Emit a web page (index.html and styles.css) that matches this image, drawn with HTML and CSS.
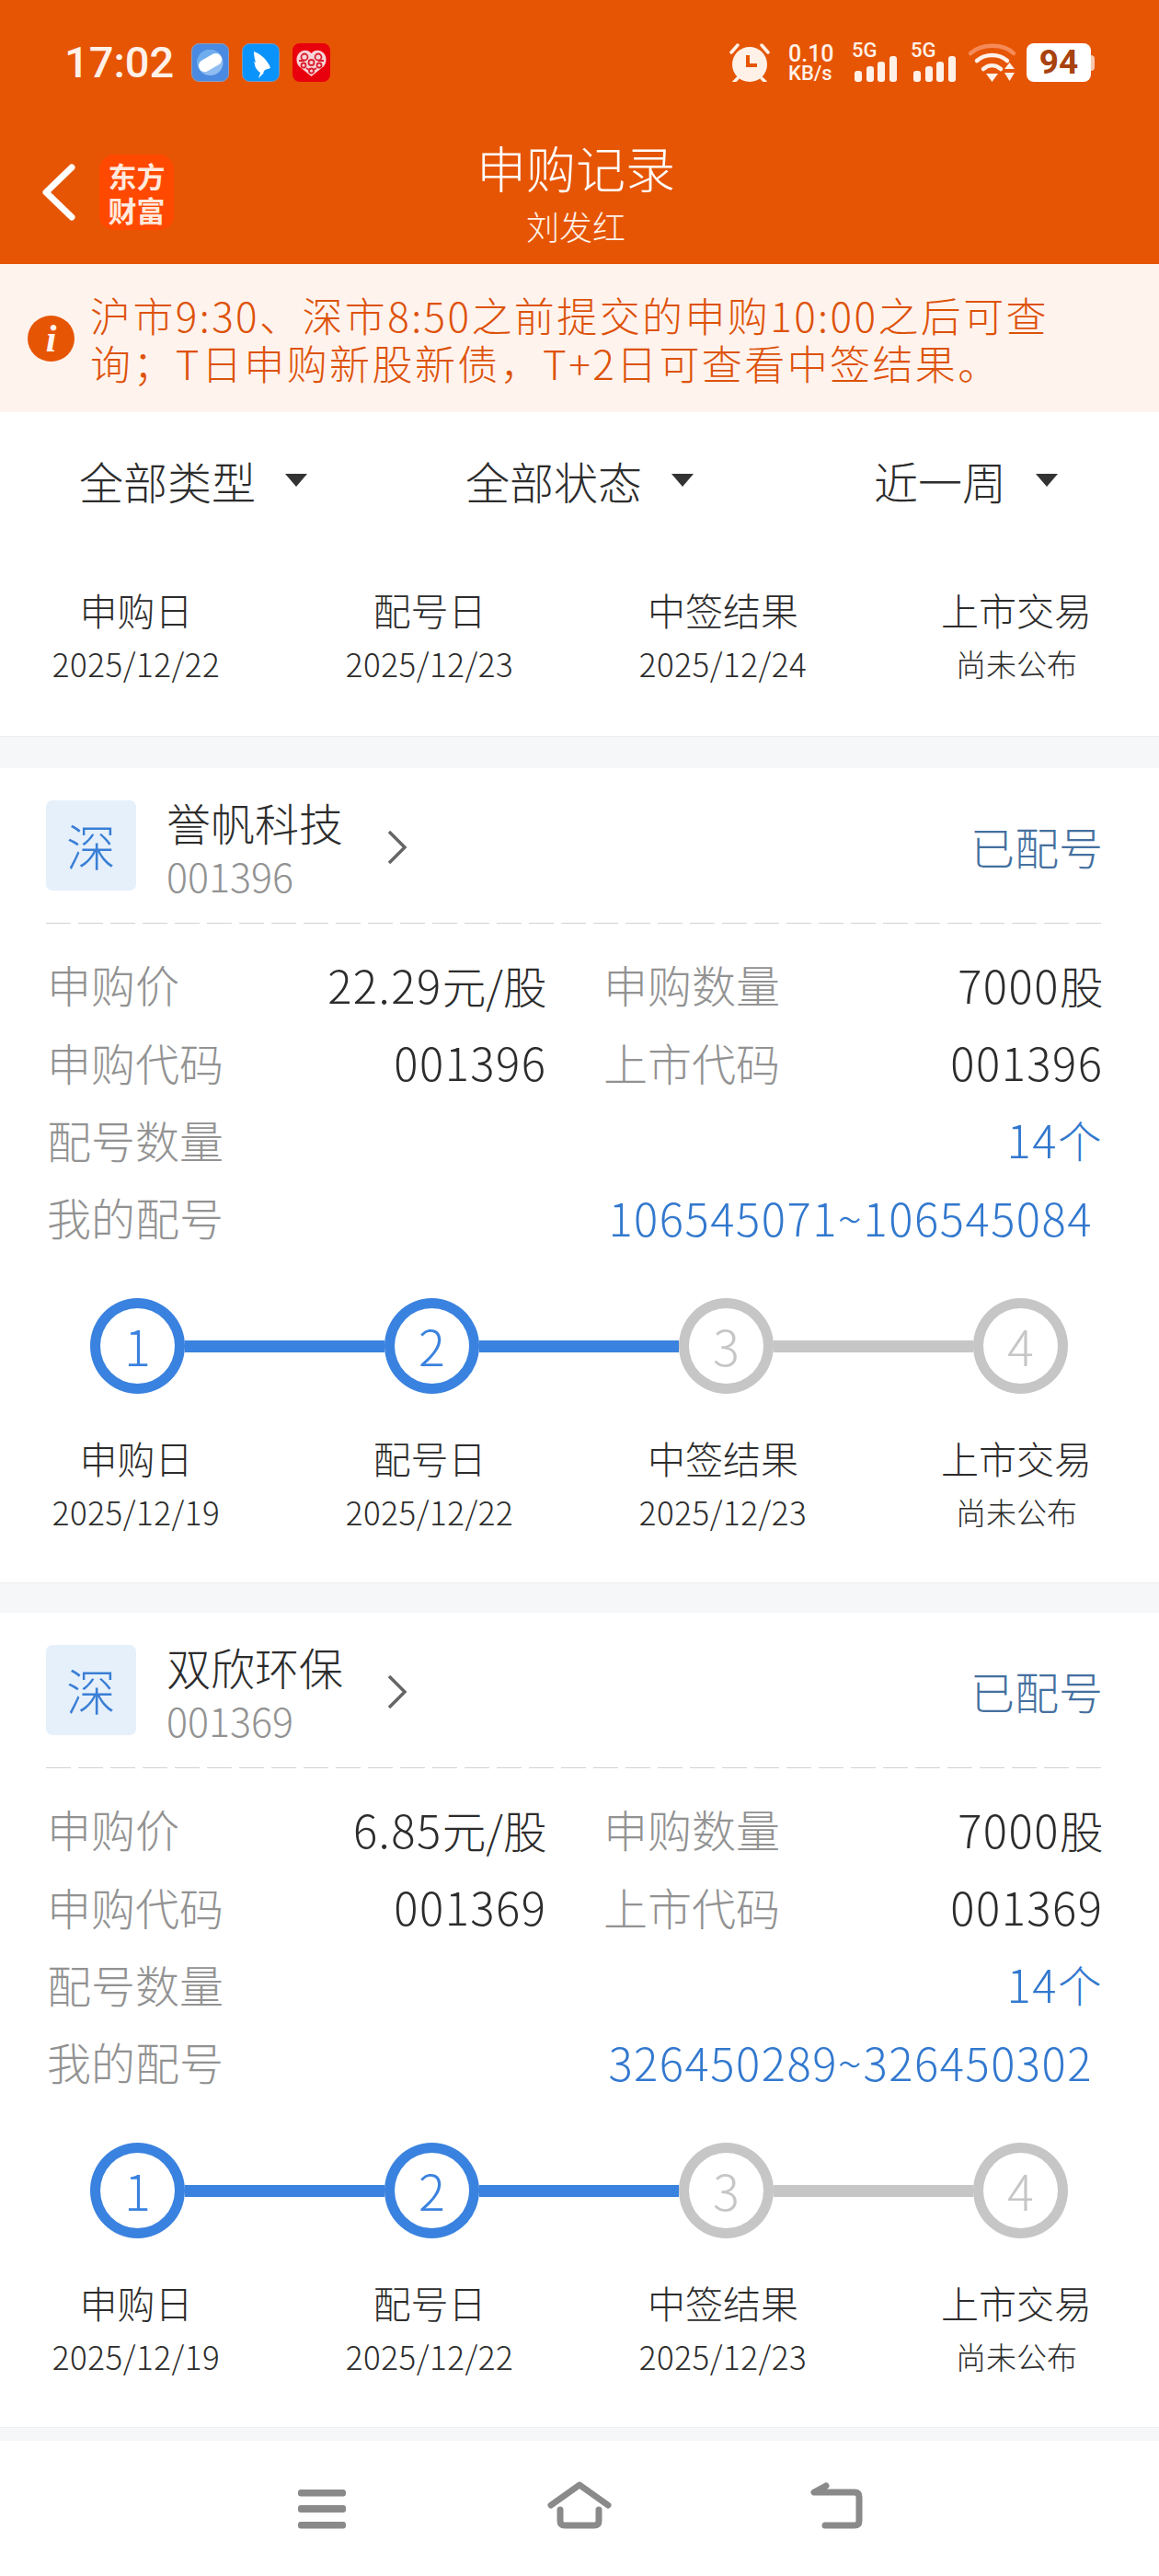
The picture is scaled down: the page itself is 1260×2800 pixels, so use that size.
FILE: index.html
```html
<!DOCTYPE html>
<html lang="zh-CN">
<head>
<meta charset="utf-8">
<title>申购记录</title>
<link rel="stylesheet" href="styles.css">
</head>
<body>
<div class="page">
  <header class="header">
    <div class="status">
      <div class="status-left">
        <span class="time">17:02</span>
        <svg class="app" viewBox="0 0 41 42"><rect x=".5" y=".5" width="40" height="41" rx="8" fill="#4A8AE0" stroke="#8E9DBB"/><circle cx="20.500" cy="21" r="14" fill="#8FBDF2"/><path d="M20.500 7a14 14 0 0 1 13 9L8 28a14 14 0 0 1 12.500-21z" fill="#6FAEEE"/><rect x="7" y="14.500" width="27" height="13" rx="6.500" fill="#fff" transform="rotate(-30 20.500 21)"/></svg>
        <svg class="app" viewBox="0 0 41 42"><rect x=".5" y=".5" width="40" height="41" rx="8" fill="#0A93FB" stroke="#7D97B8"/><path d="M13 9c6 2 12 7 15 12 1.500 2 2.500 4 3 6l-6 2-2 3 1 0-6 6 2-6c-3-2-6-6-6-9l-1-3 2 1c-1-3-2-8-2-12z" fill="#fff"/></svg>
        <svg class="app" viewBox="0 0 41 42"><rect width="41" height="42" rx="8" fill="#E9000D"/><path d="M20.500 36 7 25c-4-5-3-12 1-15 4-3 9-3 12.500 1 3.500-4 8.500-4 12.500-1 4 3 5 10 1 15z" fill="#F8D5D8"/><g stroke="#D9202E" stroke-width="1.800" fill="none"><circle cx="13" cy="15" r="3.500"/><circle cx="28" cy="15" r="3.500"/><circle cx="20.500" cy="21" r="3"/><circle cx="12" cy="24" r="2.500"/><circle cx="29" cy="24" r="2.500"/><circle cx="20.500" cy="30" r="2.500"/><path d="M7 19h6M28 19h6M15 27l3 2M26 27l-3 2"/></g></svg>
      </div>
      <div class="status-right">
        <svg class="alarm" viewBox="0 0 44 42"><circle cx="22" cy="23" r="19" fill="#FFF1E8"/><path d="M2 10 9 2M42 10 35 2M9 38 5 42M35 38 39 42" stroke="#FFF1E8" stroke-width="3.500" stroke-linecap="round"/><path d="M20 13v11h10" fill="none" stroke="#E65504" stroke-width="4"/></svg>
        <div class="speed"><span class="speed-num">0.10</span><span class="speed-unit">KB/s</span></div>
        <div class="sig"><span class="sig-text">5G</span><svg class="sig-bars" viewBox="0 0 49 28"><rect x="3" y="16" width="8" height="12" rx="3"/><rect x="16" y="11" width="8" height="17" rx="3"/><rect x="28" y="6" width="8" height="22" rx="3"/><rect x="41" y="0" width="8" height="28" rx="3"/></svg></div>
        <div class="sig sig-two"><span class="sig-text">5G</span><svg class="sig-bars" viewBox="0 0 49 28"><rect x="3" y="16" width="8" height="12" rx="3"/><rect x="16" y="11" width="8" height="17" rx="3"/><rect x="28" y="6" width="8" height="22" rx="3"/><rect x="41" y="0" width="8" height="28" rx="3"/></svg></div>
        <svg class="wifi" viewBox="0 0 51 42"><g fill="none" stroke-linecap="round" stroke-width="4.500"><path d="M2 11C14 0 38 0 49 11" stroke="#F58A58"/><path d="M9 19c9-8 24-8 33 0" stroke="#FFF1E8"/><path d="M16 28c6-5 13-5 19 0" stroke="#FFF1E8"/></g><path d="M19 33h13l-6.500 9zM39 28l5.500-7 5.500 7zM39 32h11l-5.500 9z" fill="#FFF1E8"/></svg>
        <div class="battery"><span class="battery-body">94</span><span class="battery-nub"></span></div>
      </div>
    </div>
    <div class="titlebar">
      <div class="title-left">
        <svg class="back" viewBox="0 0 37 62"><path d="M33 4 5 31l28 27" fill="none" stroke="#fff" stroke-width="7" stroke-linecap="round" stroke-linejoin="round"/></svg>
        <div class="logo"><span>东方</span><span>财富</span></div>
      </div>
      <div class="title-mid">
        <div class="title">申购记录</div>
        <div class="subtitle">刘发红</div>
      </div>
    </div>
  </header>

  <div class="notice">
    <span class="notice-icon">i</span>
    <p class="notice-text">沪市9:30、深市8:50之前提交的申购10:00之后可查询；T日申购新股新债，T+2日可查看中签结果。</p>
  </div>

  <div class="filters">
    <div class="filter"><span>全部类型</span><i class="caret"></i></div>
    <div class="filter"><span>全部状态</span><i class="caret"></i></div>
    <div class="filter"><span>近一周</span><i class="caret"></i></div>
  </div>

  <section class="block block-top">
    <div class="dates">
      <div class="date-col"><div class="date-label">申购日</div><div class="date-val">2025/12/22</div></div>
      <div class="date-col"><div class="date-label">配号日</div><div class="date-val">2025/12/23</div></div>
      <div class="date-col"><div class="date-label">中签结果</div><div class="date-val">2025/12/24</div></div>
      <div class="date-col"><div class="date-label">上市交易</div><div class="date-val date-small">尚未公布</div></div>
    </div>
  </section>

  <section class="block card">
    <div class="card-head">
      <span class="market">深</span>
      <div class="stock"><div class="stock-name">誉帆科技</div><div class="stock-code">001396</div></div>
      <svg class="chev" viewBox="0 0 22 38"><path d="M2 2l17 17L2 36" fill="none" stroke="#666" stroke-width="3.500"/></svg>
      <span class="state">已配号</span>
    </div>
    <div class="rows">
      <div class="cell"><span class="k">申购价</span><span class="v">22.29<span class="u">元/股</span></span></div>
      <div class="cell"><span class="k">申购数量</span><span class="v">7000<span class="u">股</span></span></div>
      <div class="cell"><span class="k">申购代码</span><span class="v">001396</span></div>
      <div class="cell"><span class="k">上市代码</span><span class="v">001396</span></div>
      <div class="cell wide"><span class="k">配号数量</span><span class="v link">14<span class="u">个</span></span></div>
      <div class="cell wide"><span class="k">我的配号</span><span class="v link range">106545071~106545084</span></div>
    </div>
    <div class="track">
      <span class="dot on">1</span><span class="bar on"></span>
      <span class="dot on">2</span><span class="bar on"></span>
      <span class="dot">3</span><span class="bar"></span>
      <span class="dot">4</span>
    </div>
    <div class="dates dates-card">
      <div class="date-col"><div class="date-label">申购日</div><div class="date-val">2025/12/19</div></div>
      <div class="date-col"><div class="date-label">配号日</div><div class="date-val">2025/12/22</div></div>
      <div class="date-col"><div class="date-label">中签结果</div><div class="date-val">2025/12/23</div></div>
      <div class="date-col"><div class="date-label">上市交易</div><div class="date-val date-small">尚未公布</div></div>
    </div>
  </section>

  <section class="block card">
    <div class="card-head">
      <span class="market">深</span>
      <div class="stock"><div class="stock-name">双欣环保</div><div class="stock-code">001369</div></div>
      <svg class="chev" viewBox="0 0 22 38"><path d="M2 2l17 17L2 36" fill="none" stroke="#666" stroke-width="3.500"/></svg>
      <span class="state">已配号</span>
    </div>
    <div class="rows">
      <div class="cell"><span class="k">申购价</span><span class="v">6.85<span class="u">元/股</span></span></div>
      <div class="cell"><span class="k">申购数量</span><span class="v">7000<span class="u">股</span></span></div>
      <div class="cell"><span class="k">申购代码</span><span class="v">001369</span></div>
      <div class="cell"><span class="k">上市代码</span><span class="v">001369</span></div>
      <div class="cell wide"><span class="k">配号数量</span><span class="v link">14<span class="u">个</span></span></div>
      <div class="cell wide"><span class="k">我的配号</span><span class="v link range">326450289~326450302</span></div>
    </div>
    <div class="track">
      <span class="dot on">1</span><span class="bar on"></span>
      <span class="dot on">2</span><span class="bar on"></span>
      <span class="dot">3</span><span class="bar"></span>
      <span class="dot">4</span>
    </div>
    <div class="dates dates-card">
      <div class="date-col"><div class="date-label">申购日</div><div class="date-val">2025/12/19</div></div>
      <div class="date-col"><div class="date-label">配号日</div><div class="date-val">2025/12/22</div></div>
      <div class="date-col"><div class="date-label">中签结果</div><div class="date-val">2025/12/23</div></div>
      <div class="date-col"><div class="date-label">上市交易</div><div class="date-val date-small">尚未公布</div></div>
    </div>
  </section>

  <nav class="sysnav">
    <svg class="nav-icon nav-menu" viewBox="0 0 60 56"><rect x="4" y="11" width="52" height="7.500" rx="3"/><rect x="4" y="28" width="52" height="8" rx="3"/><rect x="4" y="46" width="52" height="7.500" rx="3"/></svg>
    <svg class="nav-icon nav-home nav-line" viewBox="0 0 80 56"><path d="M9 28 40 6l31 22" class="roof"/><path d="M19 33v12q0 5 5 5h32q5 0 5-5V33"/></svg>
    <svg class="nav-icon nav-back nav-line" viewBox="0 0 70 56"><path d="M23 7 10 14h44q5 0 5 5v26q0 5-5 5H22"/></svg>
  </nav>
</div>
</body>
</html>
```
FILE: styles.css
```css
* { box-sizing: border-box; }
html, body { margin: 0; padding: 0; }
body { background: #F6F7F9; font-family: "Noto Sans CJK SC", "Noto Sans", sans-serif; font-weight: 300; color: #2C2C2C; }
p { margin: 0; }
.page { width: 1260px; height: 2800px; overflow: hidden; background: #F6F7F9; }

.header { height: 287px; background: #E65504; }
.status { height: 136px; padding: 47px 70px 0; display: flex; justify-content: space-between; align-items: flex-start; }
.status-left, .status-right { display: flex; align-items: center; height: 42px; }
.time { font-family: Roboto, sans-serif; font-weight: 500; font-size: 47px; line-height: 42px; color: #FFF1E8; width: 138px; }
.app { width: 41px; height: 42px; margin-right: 14px; }
.alarm { width: 44px; height: 42px; margin-right: 20px; }
.speed { width: 49px; margin-right: 20px; display: flex; flex-direction: column; font-family: Roboto, sans-serif; font-weight: 500; color: #FFF1E8; }
.speed-num { font-size: 25px; line-height: 23px; white-space: nowrap; }
.speed-unit { font-size: 22px; line-height: 19px; white-space: nowrap; }
.sig { width: 49px; height: 42px; margin-right: 15px; display: flex; flex-direction: column; }
.sig-two { margin-right: 14px; }
.sig-text { height: 16px; font-family: Roboto, sans-serif; font-weight: 500; font-size: 22px; line-height: 16px; color: #FFF1E8; }
.sig-bars { width: 49px; height: 28px; margin-top: -2px; fill: #FFF1E8; }
.wifi { width: 51px; height: 42px; margin-right: 12px; }
.battery { display: flex; align-items: center; }
.battery-body { width: 70px; height: 42px; background: #fff; border-radius: 8px; color: #A8420E; font-family: Roboto, sans-serif; font-weight: 700; font-size: 37px; line-height: 42px; text-align: center; }
.battery-nub { width: 4px; height: 17px; background: #F8C8AE; border-radius: 0 4px 4px 0; }

.titlebar { height: 151px; position: relative; display: flex; justify-content: center; }
.title-left { position: absolute; left: 45px; top: 32px; display: flex; align-items: center; }
.back { width: 37px; height: 62px; }
.logo { width: 81px; height: 82px; margin-left: 26px; background: #FF4800; border-radius: 16px; display: flex; flex-direction: column; align-items: center; justify-content: center; color: #FFE9DD; font-size: 31px; font-weight: 700; line-height: 37px; }
.title-mid { text-align: center; color: #fff; padding: 14px 8px 0 0; }
.title { font-size: 54px; line-height: 64px; }
.subtitle { font-size: 36px; line-height: 48px; margin-top: 7px; color: #FFF1E8; }

.notice { height: 161px; background: #FFF3EE; padding-left: 30px; display: flex; align-items: center; }
.notice-icon { width: 51px; height: 50px; flex: none; border-radius: 50%; background: #E65504; color: #FFF3EE; font-family: "Liberation Serif", serif; font-style: italic; font-weight: 700; font-size: 42px; line-height: 50px; text-align: center; }
.notice-text { width: 1090px; margin-left: 17px; font-size: 44px; line-height: 52px; letter-spacing: 2.400px; color: #DD5209; }

.filters { height: 154px; padding-bottom: 6px; display: grid; grid-template-columns: repeat(3, 420px); background: #fff; }
.filter { display: flex; align-items: center; justify-content: center; gap: 32px; font-size: 48px; }
.caret { width: 0; height: 0; border-left: 12.500px solid transparent; border-right: 12.500px solid transparent; border-top: 14px solid #333; }

.block { background: #fff; border-bottom: 1px solid #EEEEEE; }
.block-top { height: 199px; padding-top: 31px; }
.dates { display: flex; justify-content: space-between; padding: 0 45px 0 38px; }
.date-col { width: 220px; text-align: center; }
.date-label { font-size: 41px; line-height: 58px; }
.date-val { font-size: 35px; line-height: 60px; letter-spacing: .5px; white-space: nowrap; }
.date-small { font-size: 33px; letter-spacing: 0; }

.card { height: 886px; margin-top: 34px; padding: 35px 0 0; }
.card + .card { margin-top: 32px; }
.card-head { height: 98px; padding: 0 62px 0 50px; display: flex; align-items: center; }
.market { width: 98px; height: 98px; flex: none; background: #E6F0FB; border-radius: 7px; color: #3A7FD5; font-size: 54px; line-height: 98px; text-align: center; }
.stock { margin-left: 33px; align-self: flex-start; }
.stock-name { font-size: 48px; line-height: 48px; margin-top: -1px; }
.stock-code { font-size: 43px; line-height: 48px; margin-top: 10px; color: #929292; }
.chev { width: 22px; height: 38px; margin: 4px 0 0 48px; }
.state { margin-left: auto; margin-right: -1px; font-size: 48px; color: #44709F; line-height: 98px; }

.rows { margin: 35px 60px 0 50px; padding-top: 24px; display: grid; grid-template-columns: 543px 543px; column-gap: 62px; grid-auto-rows: 84.400px; background-image: repeating-linear-gradient(90deg, #D2D2D2 0 27px, transparent 27px 35px); background-size: 100% 1px; background-repeat: no-repeat; font-size: 48px; }
.cell { display: flex; justify-content: space-between; align-items: center; padding-left: 1px; white-space: nowrap; }
.wide { grid-column: 1 / -1; padding-right: 2px; }
.k { color: #929292; }
.v { font-size: 49px; letter-spacing: 1.500px; margin-right: -1.500px; }
.u { font-size: 47.500px; letter-spacing: 0; }
.link { color: #3278CE; }
.range { margin-right: 8px; }

.track { display: flex; align-items: center; padding-left: 98px; margin-top: 46px; }
.dot { width: 103px; height: 104px; flex: none; border: 11px solid #C6C6C6; border-radius: 50%; color: #C6C6C6; font-size: 54px; line-height: 80px; text-align: center; }
.dot.on { border-color: #3A82DF; color: #3A82DF; }
.bar { width: 217px; height: 13px; flex: none; margin-top: 2px; background: #C6C6C6; }
.bar.on { background: #3A82DF; }
.dates-card { margin-top: 40px; }

.sysnav { height: 147px; margin-top: 14px; padding: 42px 0 0 320px; display: flex; background: #fff; }
.nav-icon { height: 56px; fill: #8A8A8A; }
.nav-menu { width: 60px; margin-right: 210px; }
.nav-home { width: 80px; margin-right: 205px; }
.nav-back { width: 70px; }
.nav-line { fill: none; stroke: #8A8A8A; stroke-width: 7; stroke-linecap: round; stroke-linejoin: round; }
```
